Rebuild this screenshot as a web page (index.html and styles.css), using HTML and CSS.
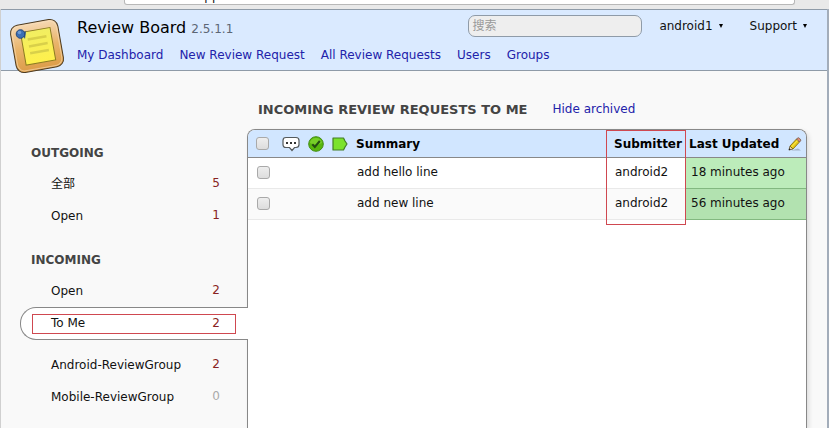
FILE: index.html
```html
<!DOCTYPE html>
<html lang="en">
<head>
<meta charset="utf-8">
<title>Review Board</title>
<link rel="stylesheet" href="styles.css">
</head>
<body>
<div class="chrome"><div class="address">app</div></div>
<div class="frame">
  <header class="topbar">
    <svg class="logo" viewBox="0 0 56 58" aria-hidden="true">
      <defs>
        <linearGradient id="wood" x1="0" y1="0" x2="0" y2="1"><stop offset="0" stop-color="#f6d9b4"/><stop offset=".5" stop-color="#e9b46b"/><stop offset="1" stop-color="#dc9c48"/></linearGradient>
        <linearGradient id="note" x1="0" y1="0" x2="0" y2="1"><stop offset="0" stop-color="#f1ee62"/><stop offset="1" stop-color="#fff04c"/></linearGradient>
      </defs>
      <g transform="rotate(-10 28 29)">
        <rect x="4" y="5" width="48" height="48" rx="8" fill="url(#wood)" stroke="#4d3b20"/>
        <rect x="5.500" y="6.500" width="45" height="45" rx="7" fill="none" stroke="#f9dfbd" stroke-opacity=".6"/>
        <path d="M14 13h30v33h-30z" fill="url(#note)" stroke="#8b7b22"/>
        <path d="M20 21h19M20 28h19M20 35h19" stroke="#d9d04a" stroke-width="2.500"/>
      </g>
      <path d="M13 17l3 5 1-8z" fill="#2c548c"/>
      <circle cx="11.500" cy="17" r="4.300" fill="#3c6fb4" stroke="#24487c"/>
      <circle cx="10.500" cy="15.500" r="1.800" fill="#6c9ad2"/>
    </svg>
    <div class="brand">
      <h1>Review Board <span>2.5.1.1</span></h1>
      <nav class="nav">
        <a href="#">My Dashboard</a><a href="#">New Review Request</a><a href="#">All Review Requests</a><a href="#">Users</a><a href="#">Groups</a>
      </nav>
    </div>
    <div class="tools">
      <input class="search" type="search" placeholder="搜索" aria-label="搜索">
      <button class="menu" type="button">android1 <svg viewBox="0 0 4 4" aria-hidden="true"><path d="M0 0h4L2 4z"/></svg></button>
      <button class="menu" type="button">Support <svg viewBox="0 0 4 4" aria-hidden="true"><path d="M0 0h4L2 4z"/></svg></button>
    </div>
  </header>
  <div class="page">
    <aside class="sidebar">
      <h2>OUTGOING</h2>
      <ul>
        <li><a href="#">全部 <span>5</span></a></li>
        <li><a href="#">Open <span>1</span></a></li>
      </ul>
      <h2>INCOMING</h2>
      <ul>
        <li><a href="#">Open <span>2</span></a></li>
        <li class="active"><a href="#">To Me <span>2</span></a></li>
        <li><a href="#">Android-ReviewGroup <span>2</span></a></li>
        <li><a href="#">Mobile-ReviewGroup <span class="zero">0</span></a></li>
      </ul>
    </aside>
    <main class="main">
      <div class="title"><h2>INCOMING REVIEW REQUESTS TO ME</h2><a href="#">Hide archived</a></div>
      <div class="panel">
        <table>
          <colgroup><col class="c-check"><col class="c-talk"><col class="c-ship"><col class="c-tag"><col><col class="c-user"><col class="c-date"></colgroup>
          <thead>
            <tr>
              <th><input type="checkbox" aria-label="Select all"></th>
              <th><svg class="talk" viewBox="0 0 18 16" role="img" aria-label="Comments"><path d="M4 1.500h10q3 0 3 3v4q0 3-3 3h-1.500l-2.500 3-2.500-3H4q-3 0-3-3v-4q0-3 3-3z" fill="#fff" stroke="#555a5c" stroke-width="1.200"/><path d="M4 6h2v2H4zM8 6h2v2H8zM12 6h2v2h-2z" fill="#333"/></svg></th>
              <th><svg class="ship" viewBox="0 0 16 16" role="img" aria-label="Ship it"><circle cx="8" cy="8" r="7.300" fill="#58b70d" stroke="#438d14"/><path d="M2 7a6 5 0 0 1 12 0q-6 3-12 0z" fill="#84d934" opacity=".7"/><path d="M4.300 8.300l2.500 2.700 5-6" fill="none" stroke="#244d12" stroke-width="2"/></svg></th>
              <th><svg class="tag" viewBox="0 0 16 14" role="img" aria-label="My requests"><path d="M1 1h10.500l1.500 3 2 3-2 3-1.500 3H1z" fill="#7be22c" stroke="#437d25" stroke-width="1.200" stroke-linejoin="round"/></svg></th>
              <th>Summary</th>
              <th class="user">Submitter</th>
              <th class="date"><div class="date-head">Last Updated
                <button class="edit" type="button" aria-label="Edit columns"><svg viewBox="0 0 14 14" aria-hidden="true"><path d="M3 13.500h10l-3-2z" fill="#8795a6" opacity=".6"/><path d="M1 13l1-4 3 3z" fill="#f3d9a1" stroke="#5d4a25" stroke-width=".8"/><path d="M2 9l6.500-7 3 3L5 12z" fill="#e6c81c" stroke="#806e16" stroke-width=".9"/><path d="M3.500 10l6.500-7" stroke="#fff04a"/><path d="M8.500 2l1-1q.8-.7 1.800.2l1 1q.9 1 .2 1.800l-1 1z" fill="#df8d78" stroke="#71574a" stroke-width=".8"/><path d="M.7 13.300l.5-2 1.500 1.500z" fill="#222"/></svg></button></div></th>
            </tr>
          </thead>
          <tbody>
            <tr><td><input type="checkbox" aria-label="Select add hello line"></td><td></td><td></td><td></td><td>add hello line</td><td class="user">android2</td><td class="date">18 minutes ago</td></tr>
            <tr><td><input type="checkbox" aria-label="Select add new line"></td><td></td><td></td><td></td><td>add new line</td><td class="user">android2</td><td class="date">56 minutes ago</td></tr>
          </tbody>
        </table>
      </div>
    </main>
  </div>
</div>
</body>
</html>
```
FILE: styles.css
```css
* { box-sizing: border-box; }
body {
  margin: 0;
  height: 100vh;
  display: flex;
  flex-direction: column;
  overflow: hidden;
  font: 12px/16px "DejaVu Sans", "Noto Sans CJK SC", sans-serif;
  color: #111;
  background: #f9f9f9;
}
a { color: #2222aa; text-decoration: none; }
h1, h2, ul { margin: 0; padding: 0; font-weight: normal; }
ul { list-style: none; }
button { font: inherit; color: inherit; background: none; border: 0; padding: 0; }

.chrome { flex: none; height: 9px; padding: 0 34px 0 124px; background: #e9e9e9; }
.address {
  height: 5px;
  padding-left: 72px;
  display: flex;
  align-items: flex-end;
  overflow: hidden;
  background: #fff;
  border: 1px solid #b8b8b8;
  border-top: 0;
  border-radius: 0 0 3px 3px;
  line-height: 16px;
}

.frame {
  flex: 1;
  display: flex;
  flex-direction: column;
  border-left: 1px solid #d0d0d0;
  border-right: 2px solid #a3adba;
  min-height: 0;
}
.topbar {
  flex: none;
  height: 62px;
  display: flex;
  align-items: flex-start;
  background: #daeaff;
  border-top: 1px solid #8f9ba8;
  border-bottom: 1px solid #8f9ba8;
}
.logo { flex: none; width: 56px; height: 58px; margin: 7px 12px 0 8px; position: relative; }
.brand { flex: 1; min-width: 0; white-space: nowrap; }
h1 { font-size: 16px; line-height: 24px; padding-top: 6px; color: #000; }
h1 span { font-size: 12px; color: #5c6675; }
.nav { display: flex; gap: 16px; padding-top: 5px; line-height: 18px; }
.tools { display: flex; align-items: center; padding: 5px 20px 0 0; }
.search {
  width: 174px;
  height: 22px;
  margin-right: 17px;
  padding: 0 3px;
  border: 1px solid #8f9ba8;
  border-radius: 7px;
  background: #eee;
  font: inherit;
  appearance: none;
}
.search::placeholder { color: #999; }
.menu { display: flex; align-items: center; gap: 6px; margin-right: 27px; }
.menu:last-child { margin-right: 0; }
.menu svg { width: 4px; height: 4px; }

.page {
  flex: 1;
  display: grid;
  grid-template-columns: 246px 1fr;
  padding-right: 20px;
  min-height: 0;
}
.sidebar { padding-top: 66px; }
.sidebar h2, .title h2 { font-size: 12px; font-weight: bold; color: #444; }
.sidebar h2 { padding-left: 30px; line-height: 32px; }
.sidebar ul { margin-bottom: 11px; }
.sidebar li a {
  display: flex;
  justify-content: space-between;
  height: 32px;
  padding: 0 27px 0 50px;
  line-height: 30px;
  color: #111;
}
.sidebar span { color: #882222; line-height: 28px; }
.sidebar .zero { color: #aaa; }
.sidebar .active {
  position: relative;
  margin: -1px -1px 10px 19px;
  background: #fff;
  border: 1px solid #888;
  border-right: 0;
  border-radius: 16px 0 0 16px;
}
.sidebar .active a {
  height: 20px;
  margin: 6px 12px 5px 11px;
  padding: 0 15px 0 18px;
  line-height: 16px;
  border: 1px solid #cf4850;
}
.sidebar .active span { line-height: 16px; }

.main { display: flex; flex-direction: column; min-width: 0; }
.title { display: flex; gap: 25px; padding: 29px 0 10px 11px; line-height: 19px; }
.title h2 { font-size: 13px; }
.panel {
  flex: 1;
  background: #fff;
  border: 1px solid #888;
  border-bottom: 0;
  border-radius: 8px 8px 0 0;
  box-shadow: 2px 2px 4px #ddd;
}
table { width: 100%; table-layout: fixed; border-collapse: separate; border-spacing: 0; white-space: nowrap; }
.c-check { width: 28px; }
.c-talk { width: 28px; }
.c-ship { width: 24px; }
.c-tag { width: 22px; }
.c-user { width: 80px; }
.c-date { width: 120px; }
th, td { padding: 0 0 0 6px; text-align: left; }
th { height: 28px; background: #d1e6ff; border-bottom: 1px solid #888; color: #000; }
th:first-child { border-top-left-radius: 7px; }
th:last-child { border-top-right-radius: 7px; }
td { height: 31px; border-bottom: 1px solid #e9e9e9; padding: 0 0 2px 7px; }
th svg { display: block; }
.talk { width: 18px; height: 16px; }
.ship { width: 16px; height: 16px; }
.tag { width: 16px; height: 14px; }
th:nth-child(3), th:nth-child(4) { padding-left: 4px; }
tbody tr:nth-child(2) { background: #fafafa; }
th.user { padding-left: 8px; position: relative; }
td.user { padding-left: 9px; }
/* Outline around the whole submitter column */
th.user::after {
  content: "";
  position: absolute;
  inset: 0 0 auto 0;
  height: 93px;
  border: 1px solid #cf4850;
}
th.date { padding-left: 3px; }
td.date { padding-left: 5px; background: #bcecba; border-color: #82b880; }
tr:nth-child(2) td.date { background: #b2e2b0; }
.date-head { display: flex; justify-content: space-between; align-items: center; padding-right: 4px; }
.edit svg { display: block; width: 14px; height: 14px; }
input[type="checkbox"] {
  display: block;
  appearance: none;
  width: 13px;
  height: 13px;
  margin: 0 0 0 2px;
  border: 1px solid #a9a9a9;
  border-radius: 3px;
  background: linear-gradient(#eee, #ddd);
}
```
